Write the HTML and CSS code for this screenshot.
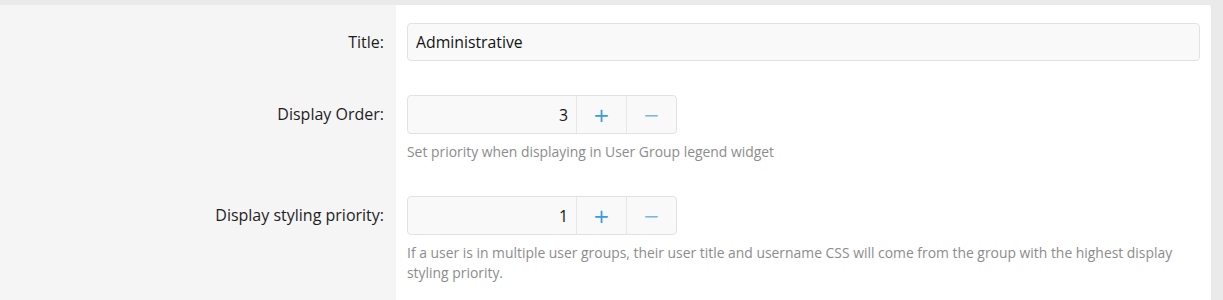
FILE: index.html
```html
<!DOCTYPE html>
<html lang="en">
<head>
    <meta charset="utf-8"/>
    <title>User group options</title>
    <link rel="stylesheet" href="styles.css">
</head>
<body>
<div class="block">
    <dl class="form-row">
        <dt><label for="title">Title:</label></dt>
        <dd>
            <input id="title" class="input" type="text" value="Administrative">
        </dd>
    </dl>

    <dl class="form-row">
        <dt><label for="display_order">Display Order:</label></dt>
        <dd>
            <div class="spinner">
                <input id="display_order" class="spinner-value" type="text" value="3">
                <button class="spinner-btn spinner-up" title="Increase">+</button>
                <button class="spinner-btn spinner-down" title="Decrease">&minus;</button>
            </div>
            <div class="explain">Set priority when displaying in User Group legend widget</div>
        </dd>
    </dl>

    <dl class="form-row">
        <dt><label for="display_style_priority">Display styling priority:</label></dt>
        <dd>
            <div class="spinner">
                <input id="display_style_priority" class="spinner-value" type="text" value="1">
                <button class="spinner-btn spinner-up" title="Increase">+</button>
                <button class="spinner-btn spinner-down" title="Decrease">&minus;</button>
            </div>
            <div class="explain">If a user is in multiple user groups, their user title and username CSS will come from the group with the highest display styling priority.</div>
        </dd>
    </dl>
</div>
</body>
</html>
```

FILE: styles.css
```css
html {
    font-family: "Open Sans", "Noto Sans", sans-serif;
}
body {
    margin: 0;
    padding: 5px 12px 0 0;
    background: #eaeaea;
    height: 295px;
    overflow: hidden;
}
.block {
    background: linear-gradient(to right, #f5f5f5 396px, #fff 396px);
    border-top-right-radius: 3px;
    padding-top: 1px;
    height: 100%;
}
.form-row {
    display: grid;
    grid-template-columns: 396px 1fr;
    margin: 0;
    padding: 17px 0;
}
.form-row dt {
    text-align: right;
    padding-right: 12px;
    font-size: 16px;
    line-height: 38px;
    color: #1e1e1e;
}
.form-row dd {
    margin: 0;
    padding: 0 11px;
}
.input {
    box-sizing: border-box;
    width: 100%;
    height: 38px;
    padding: 0 8px;
    font: inherit;
    font-size: 15.8px;
    color: #141414;
    background: #f9f9f9;
    border: 1px solid #e2e2e2;
    border-radius: 4px;
}
.spinner {
    display: inline-flex;
    height: 39px;
    box-sizing: border-box;
    background: #f9f9f9;
    border: 1px solid #e2e2e2;
    border-radius: 4px;
}
.spinner-value {
    width: 168px;
    box-sizing: border-box;
    padding: 0 8px;
    font: inherit;
    font-size: 15.8px;
    color: #141414;
    text-align: right;
    background: transparent;
    border: none;
}
.spinner-btn {
    width: 50px;
    padding: 0;
    font-family: "DejaVu Sans", sans-serif;
    font-size: 20px;
    background: transparent;
    border: none;
    border-left: 1px solid #e6e6e6;
}
.spinner-up {
    color: #3a9be0;
}
.spinner-down {
    color: #7ab8e4;
}
.explain {
    margin-top: 8px;
    font-size: 13.9px;
    line-height: 20px;
    color: #8c8c8c;
}
```
